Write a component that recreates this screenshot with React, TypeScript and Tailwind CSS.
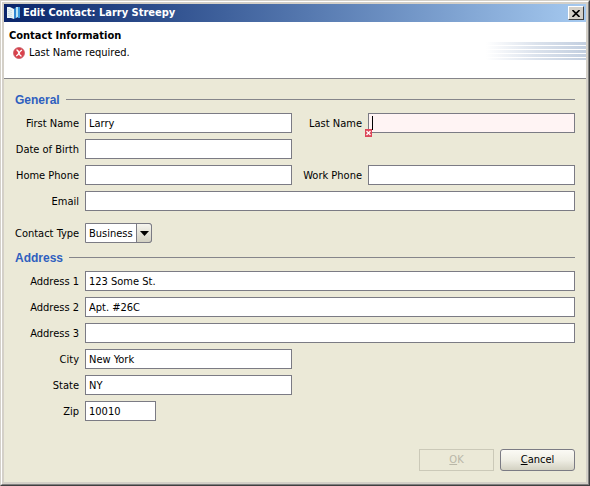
import React from "react";

const inputBase =
  "block h-5 w-full min-w-0 rounded-none border border-[#7b7b84] px-[3px] text-[11px] leading-4 text-black outline-none";

function Label({ htmlFor, children }: { htmlFor: string; children: React.ReactNode }) {
  return (
    <label htmlFor={htmlFor} className="h-5 whitespace-nowrap text-right leading-[22px]">
      {children}
    </label>
  );
}

type FieldProps = {
  id: string;
  label: string;
  value?: string;
  className?: string;
};

function Field({ id, label, value = "", className = "" }: FieldProps) {
  return (
    <>
      <Label htmlFor={id}>{label}</Label>
      <div className={className}>
        <input id={id} type="text" defaultValue={value} className={`${inputBase} bg-white`} />
      </div>
    </>
  );
}

function Section({ title }: { title: string }) {
  return (
    <div className="flex h-3.5 items-center gap-1.5">
      <h2 className="font-['Liberation_Sans',Arial,sans-serif] text-[12px] font-bold leading-[14px] text-[#2f5fbf]">
        {title}
      </h2>
      <div className="mb-px h-px flex-1 bg-[#85858a]" />
    </div>
  );
}

function BookIcon() {
  return (
    <svg width="14" height="14" viewBox="0 0 14 14" aria-hidden="true">
      <path d="M0 1 L3 1 L7 3 V13 L4 12 L0 12 Z" fill="#e9f3f6" />
      <path d="M1 3.5 L5 4.5 M1 5.5 L5 6.5 M1 7.5 L5 8.5 M1 9.5 L5 10.5" stroke="#b4cdd8" strokeWidth="0.6" />
      <path d="M7 3 L9 1 V12 L7 13 Z" fill="#2f86d2" />
      <path d="M9 1 H11 V11 L9 12 Z" fill="#b8e2f4" />
      <path d="M11 1 H13 V12 H11 Z" fill="#3c9ade" />
    </svg>
  );
}

function ErrorIcon() {
  return (
    <svg width="12" height="12" viewBox="0 0 12 12" aria-hidden="true">
      <circle cx="6" cy="6" r="5.5" fill="#d9414b" stroke="#c8606a" strokeWidth="0.8" />
      <path d="M3.5 3 Q5 3 6 6 T8.5 9 M9 3 Q7 4 6 6 T3.2 9" fill="none" stroke="#fff" strokeWidth="1.3" />
    </svg>
  );
}

function HeaderStripes() {
  return (
    <svg width="100" height="20" viewBox="0 0 100 20" aria-hidden="true">
      <defs>
        <linearGradient id="stripe" x1="0" x2="1" y1="0" y2="0">
          <stop offset="0" stopColor="#c3cfe0" stopOpacity="0" />
          <stop offset="0.5" stopColor="#c3cfe0" stopOpacity="0.6" />
          <stop offset="1" stopColor="#c3cfe0" />
        </linearGradient>
      </defs>
      <rect x="0" y="0" width="100" height="3" fill="url(#stripe)" />
      <rect x="0" y="4" width="100" height="3" fill="url(#stripe)" />
      <rect x="0" y="8" width="100" height="3" fill="url(#stripe)" />
      <rect x="0" y="12" width="100" height="3" fill="url(#stripe)" />
      <rect x="0" y="16" width="100" height="2" fill="url(#stripe)" />
    </svg>
  );
}

export default function App() {
  return (
    <div className="flex min-h-screen border border-t-[#d4d0c8] border-l-[#d4d0c8] border-r-[#404040] border-b-[#404040] bg-[#d4d0c8] font-['DejaVu_Sans_Condensed','DejaVu_Sans',sans-serif] text-[11px] text-black">
      <div className="flex min-w-0 flex-1 border border-t-white border-l-white border-r-[#808080] border-b-[#808080] p-0.5">
        <div className="flex min-w-0 flex-1 flex-col bg-[#ebe9d7]">
          <div className="flex h-[18px] items-center gap-0.5 bg-linear-to-r from-[#0a246a] to-[#a6caf0] pr-0.5 pl-[3px]">
            <BookIcon />
            <h1 className="flex-1 truncate font-bold leading-[18px] text-white">
              Edit Contact: Larry Streepy
            </h1>
            <button
              type="button"
              aria-label="Close"
              className="flex h-3.5 w-4 items-center justify-center border border-t-white border-l-white border-r-[#404040] border-b-[#404040] bg-[#d4d0c8]"
            >
              <svg width="8" height="7" viewBox="0 0 8 7" aria-hidden="true">
                <path d="M0.5 0 L7.5 7 M7.5 0 L0.5 7" stroke="#000" strokeWidth="1.6" />
              </svg>
            </button>
          </div>

          <header className="flex h-[57px] justify-between border-b border-[#85858a] bg-white pt-1.5 pl-[5px]">
            <div>
              <h2 className="font-bold leading-4">Contact Information</h2>
              <p className="mt-px flex items-center gap-1 pl-1 leading-4">
                <ErrorIcon />
                Last Name required.
              </p>
            </div>
            <div className="mt-3.5">
              <HeaderStripes />
            </div>
          </header>

          <form
            className="flex flex-1 flex-col px-[11px] pt-3.5 pb-[11px]"
            onSubmit={(e) => e.preventDefault()}
          >
            <Section title="General" />
            <div className="mt-1.5 grid grid-cols-[64px_1fr_64px_1fr] gap-1.5">
              <Field id="first" label="First Name" value="Larry" />
              <Label htmlFor="last">Last Name</Label>
              <div className="relative">
                <input
                  id="last"
                  type="text"
                  aria-invalid="true"
                  className={`${inputBase} bg-[#fff4f4]`}
                />
                <span className="absolute top-[3px] left-1 h-3.5 w-px bg-black" />
                <svg
                  className="absolute -bottom-1 -left-[3px]"
                  width="7"
                  height="8"
                  viewBox="0 0 7 8"
                  aria-hidden="true"
                >
                  <rect width="7" height="8" fill="#dc4658" />
                  <path d="M1.5 2 L5.5 6 M5.5 2 L1.5 6" stroke="#fff" strokeWidth="1.3" />
                </svg>
              </div>
              <Field id="dob" label="Date of Birth" />
              <div className="col-span-2" />
              <Field id="home" label="Home Phone" />
              <Field id="work" label="Work Phone" />
              <Field id="email" label="Email" className="col-span-3" />
            </div>

            <div className="mt-3 grid grid-cols-[64px_1fr] gap-1.5">
              <Label htmlFor="type">Contact Type</Label>
              <div className="relative w-[67px]">
                <select
                  id="type"
                  defaultValue="Business"
                  className="block h-5 w-full appearance-none rounded-r-[3px] border border-[#7b7b84] bg-white pt-px pr-4 pl-[3px] text-[11px] leading-4 outline-none"
                >
                  <option>Business</option>
                  <option>Personal</option>
                </select>
                <span className="pointer-events-none absolute inset-y-0 right-0 flex w-4 items-center justify-center rounded-r-[3px] border border-[#7b7b84] bg-linear-to-b from-[#f6f5ef] to-[#d2d0c2]">
                  <svg width="9" height="5" viewBox="0 0 9 5" aria-hidden="true">
                    <path d="M0 0 H9 L4.5 5 Z" fill="#000" />
                  </svg>
                </span>
              </div>
            </div>

            <div className="mt-2">
              <Section title="Address" />
            </div>
            <div className="mt-1.5 grid grid-cols-[64px_1fr_64px_1fr] gap-1.5">
              <Field id="address1" label="Address 1" value="123 Some St." className="col-span-3" />
              <Field id="address2" label="Address 2" value="Apt. #26C" className="col-span-3" />
              <Field id="address3" label="Address 3" className="col-span-3" />
              <Field id="city" label="City" value="New York" />
              <div className="col-span-2" />
              <Field id="state" label="State" value="NY" />
              <div className="col-span-2" />
              <Field id="zip" label="Zip" value="10010" className="w-[71px]" />
            </div>

            <div className="mt-auto flex justify-end gap-1.5 pt-4">
              <button
                type="button"
                disabled
                className="h-[22px] w-[75px] border border-[#cbc9b8] pt-px text-[#b9b7a8]"
              >
                <span className="underline">O</span>K
              </button>
              <button
                type="button"
                className="h-[22px] w-[75px] rounded-[3px] border border-[#7b7b84] bg-linear-to-b from-[#fbfaf5] via-[#efeee4] to-[#d3d1c2] pt-px"
              >
                <span className="underline">C</span>ancel
              </button>
            </div>
          </form>
        </div>
      </div>
    </div>
  );
}
